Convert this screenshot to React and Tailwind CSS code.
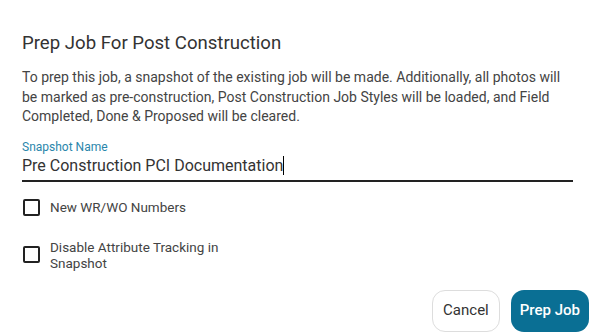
export default function App() {
  return (
    <div className="w-[591px] h-[334px] bg-white font-['Roboto',sans-serif] overflow-hidden">
      <div className="pl-[22px] pr-[18px] pt-[31px]">
        <h2 className="text-[18.6px] leading-[24px] text-[#333333] font-normal">
          Prep Job For Post Construction
        </h2>
        <p className="mt-[13px] text-[14px] leading-[19.5px] text-[#444444]">
          To prep this job, a snapshot of the existing job will be made. Additionally, all photos will be marked as
          pre-construction, Post Construction Job Styles will be loaded, and Field Completed, Done &amp; Proposed will
          be cleared.
        </p>

        {/* Snapshot name field */}
        <div className="mt-[12px]">
          <label className="block text-[12px] leading-[16px] text-[#2a86ab]">Snapshot Name</label>
          <div className="flex items-center border-b-2 border-[#222222] pb-[3px] text-[16px] leading-[22px] text-[#333333]">
            <span>Pre Construction PCI Documentation</span>
            <span className="inline-block w-px h-[19px] bg-black" />
          </div>
        </div>

        {/* Options */}
        <div className="mt-[17px] flex items-center gap-[10px]">
          <span className="w-[17px] h-[17px] border-2 border-[#222222] rounded-[2px] ml-[1px]" />
          <span className="text-[13.5px] leading-[16px] text-[#444444]">New WR/WO Numbers</span>
        </div>
        <div className="mt-[23px] flex items-center gap-[10px]">
          <span className="w-[17px] h-[17px] border-2 border-[#222222] rounded-[2px] ml-[1px] shrink-0" />
          <span className="w-[200px] text-[13.5px] leading-[16px] text-[#444444]">
            Disable Attribute Tracking in Snapshot
          </span>
        </div>
      </div>

      {/* Actions */}
      <div className="flex justify-end gap-[11px] pr-[2px] mt-[19px]">
        <button className="h-[42px] px-[10px] rounded-[13px] border border-[#dddddd] bg-white text-[15px] text-[#333333]">
          Cancel
        </button>
        <button className="h-[42px] px-[9px] rounded-[13px] bg-[#0a6f94] text-[15px] font-medium text-white">
          Prep Job
        </button>
      </div>
    </div>
  );
}
